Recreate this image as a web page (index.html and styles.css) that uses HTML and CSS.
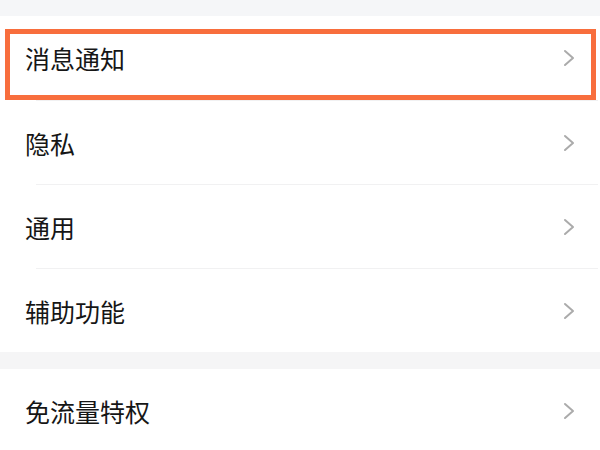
FILE: index.html
```html
<!DOCTYPE html>
<html lang="zh-CN">
<head>
<meta charset="utf-8">
<title>设置</title>
<link rel="stylesheet" href="styles.css">
</head>
<body>
<div class="band band-top"></div>
<div class="group">
  <div class="row"><span class="label">消息通知</span><svg class="chev" width="12" height="18" viewBox="0 0 12 18"><polyline points="2,2 10,9 2,16"/></svg></div>
  <div class="row"><span class="label">隐私</span><svg class="chev" width="12" height="18" viewBox="0 0 12 18"><polyline points="2,2 10,9 2,16"/></svg></div>
  <div class="row"><span class="label">通用</span><svg class="chev" width="12" height="18" viewBox="0 0 12 18"><polyline points="2,2 10,9 2,16"/></svg></div>
  <div class="row"><span class="label">辅助功能</span><svg class="chev" width="12" height="18" viewBox="0 0 12 18"><polyline points="2,2 10,9 2,16"/></svg></div>
</div>
<div class="band band-mid"></div>
<div class="group">
  <div class="row"><span class="label">免流量特权</span><svg class="chev" width="12" height="18" viewBox="0 0 12 18"><polyline points="2,2 10,9 2,16"/></svg></div>
</div>
<div class="highlight"></div>
</body>
</html>
```
FILE: styles.css
```css
html, body {
  margin: 0;
  padding: 0;
  background: #ffffff;
}
body {
  position: relative;
  width: 600px;
  height: 450px;
  overflow: hidden;
  font-family: "Noto Sans CJK SC", "Noto Sans", sans-serif;
  color: #161616;
}
.band {
  background: #f5f6f8;
}
.band-top {
  height: 16px;
}
.band-mid {
  height: 17px;
  background: #f5f5f6;
}
.group {
  background: #ffffff;
}
.row {
  position: relative;
  height: 84px;
  box-sizing: border-box;
  display: flex;
  align-items: center;
  justify-content: space-between;
  padding: 0 25px 0 25px;
}
.row + .row {
  border-top: 1px solid transparent;
}
.row + .row::before {
  content: "";
  position: absolute;
  left: 36px;
  right: 2px;
  top: -1px;
  height: 1px;
  background: #f1f1f2;
}
.label {
  font-size: 25px;
  letter-spacing: 0;
}
.chev {
  display: block;
}
.chev polyline {
  fill: none;
  stroke: #ababab;
  stroke-width: 2;
  stroke-linecap: round;
  stroke-linejoin: round;
}
.highlight {
  position: absolute;
  left: 5px;
  top: 29px;
  width: 591px;
  height: 71px;
  box-sizing: border-box;
  border: 5px solid #f86e3d;
}
```
